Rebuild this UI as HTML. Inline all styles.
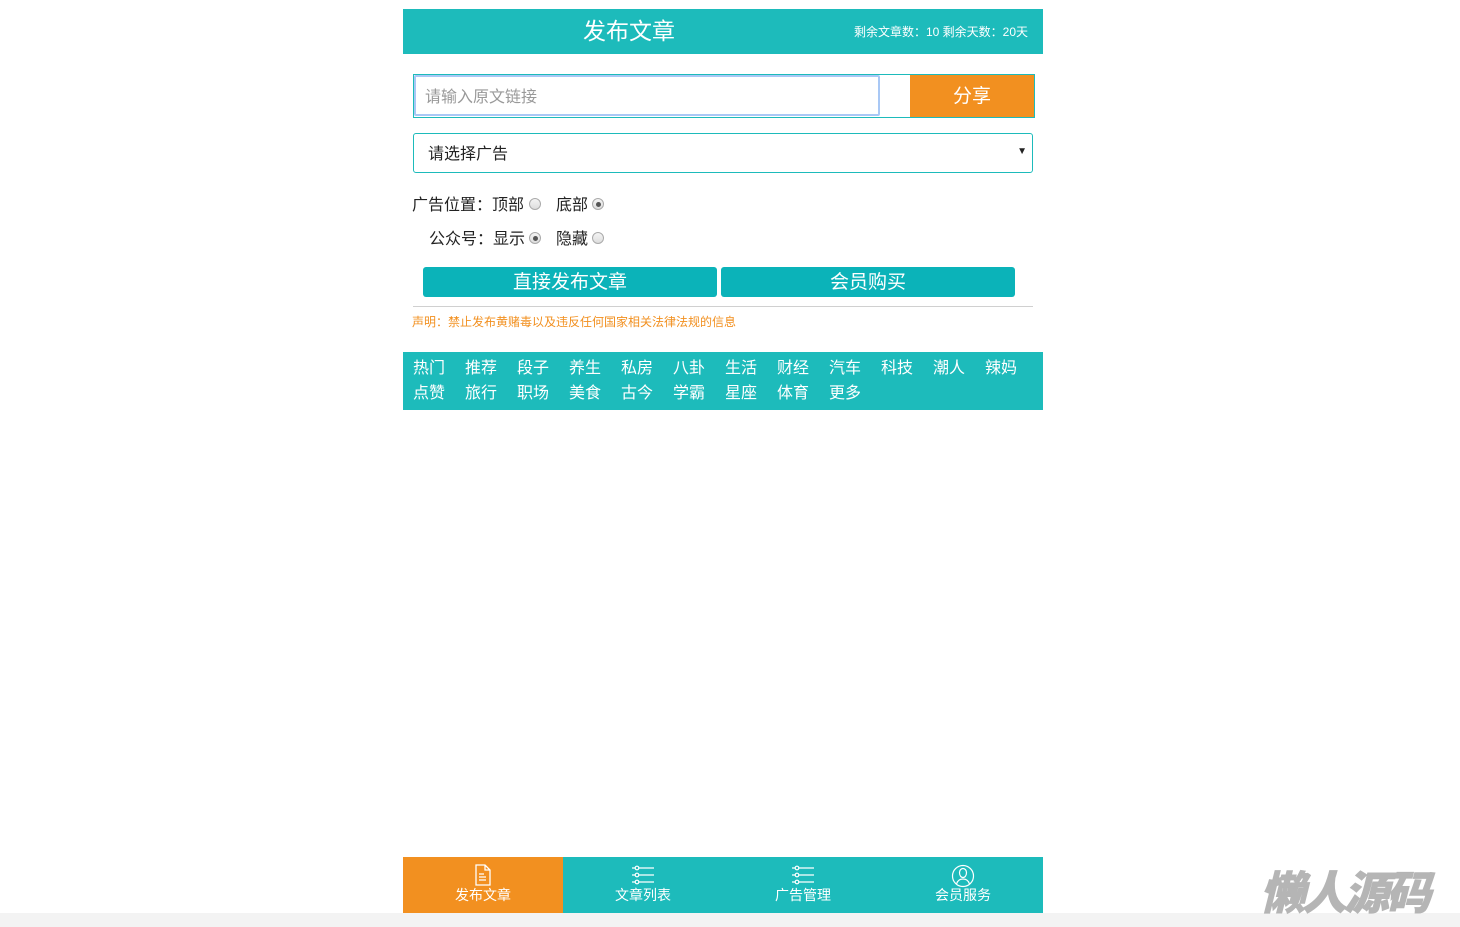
<!DOCTYPE html>
<html><head><meta charset="utf-8"><style>
*{margin:0;padding:0;box-sizing:border-box}
body{width:1460px;height:927px;background:#fff;position:relative;overflow:hidden;font-family:"Liberation Sans","Noto Sans CJK SC",sans-serif;color:#222}
.a{position:absolute}
.t{background:#1dbbbb}
.w{color:#fff}
.cat span{position:absolute;font-size:16px;color:#fff;line-height:20px}
.rad{position:absolute;width:12px;height:12px;border-radius:50%;border:1px solid #aaa;background:linear-gradient(#f4f4f4,#ddd)}
.rad.on::after{content:"";position:absolute;left:2.5px;top:2.5px;width:5px;height:5px;border-radius:50%;background:#555}
.nav{position:absolute;top:857px;width:160px;height:56px;text-align:center;color:#fff;font-size:14px}
.nav .l{position:absolute;top:29px;left:0;right:0;line-height:18px}
</style></head><body>
<div class="a t" style="left:403px;top:9px;width:640px;height:45px"></div>
<div class="a w" style="left:583px;top:16px;font-size:23px;line-height:30px">发布文章</div>
<div class="a w" style="left:854px;top:24px;font-size:12px;line-height:16px">剩余文章数：10 剩余天数：20天</div>

<div class="a" style="left:413px;top:74px;width:622px;height:44px;border:1px solid #1dbbbb"></div>
<div class="a" style="left:414px;top:75px;width:466px;height:41px;border:2px solid #a9c8f5;border-radius:2px;font-size:16px;color:#999;padding:6px 0 0 9px">请输入原文链接</div>
<div class="a w" style="left:910px;top:75px;width:124px;height:42px;background:#f29020;font-size:19px;text-align:center;line-height:44px">分享</div>

<div class="a" style="left:413px;top:133px;width:620px;height:40px;border:1px solid #1dbbbb;border-radius:3px;font-size:16px;padding:6px 0 0 14px">请选择广告<span style="position:absolute;right:5px;top:12px;font-size:10px">▼</span></div>

<div class="a" style="left:412px;top:196px;font-size:16px;line-height:20px">广告位置：顶部</div>
<div class="rad" style="left:529px;top:198px"></div>
<div class="a" style="left:556px;top:196px;font-size:16px;line-height:20px">底部</div>
<div class="rad on" style="left:592px;top:198px"></div>
<div class="a" style="left:429px;top:230px;font-size:16px;line-height:20px">公众号：显示</div>
<div class="rad on" style="left:529px;top:232px"></div>
<div class="a" style="left:556px;top:230px;font-size:16px;line-height:20px">隐藏</div>
<div class="rad" style="left:592px;top:232px"></div>

<div class="a w" style="left:423px;top:267px;width:294px;height:30px;background:#0bb3b9;border-radius:3px;text-align:center;font-size:19px;line-height:32px">直接发布文章</div>
<div class="a w" style="left:721px;top:267px;width:294px;height:30px;background:#0bb3b9;border-radius:3px;text-align:center;font-size:19px;line-height:32px">会员购买</div>
<div class="a" style="left:413px;top:306px;width:620px;height:1px;background:#d0d0d0"></div>
<div class="a" style="left:412px;top:314px;font-size:12px;color:#f29020;line-height:16px">声明：禁止发布黄赌毒以及违反任何国家相关法律法规的信息</div>

<div class="a t cat" style="left:403px;top:352px;width:640px;height:58px">
<span style="left:10px;top:7px">热门</span><span style="left:62px;top:7px">推荐</span><span style="left:114px;top:7px">段子</span><span style="left:166px;top:7px">养生</span><span style="left:218px;top:7px">私房</span><span style="left:270px;top:7px">八卦</span><span style="left:322px;top:7px">生活</span><span style="left:374px;top:7px">财经</span><span style="left:426px;top:7px">汽车</span><span style="left:478px;top:7px">科技</span><span style="left:530px;top:7px">潮人</span><span style="left:582px;top:7px">辣妈</span>
<span style="left:10px;top:32px">点赞</span><span style="left:62px;top:32px">旅行</span><span style="left:114px;top:32px">职场</span><span style="left:166px;top:32px">美食</span><span style="left:218px;top:32px">古今</span><span style="left:270px;top:32px">学霸</span><span style="left:322px;top:32px">星座</span><span style="left:374px;top:32px">体育</span><span style="left:426px;top:32px">更多</span>
</div>

<div class="a" style="left:0;top:913px;width:1460px;height:14px;background:#f3f3f3"></div>

<div class="nav" style="left:403px;background:#f29020">
<svg class="a" style="left:71px;top:7px" width="18" height="22" viewBox="0 0 18 22" fill="none" stroke="#fff" stroke-width="1.3"><path d="M2 1h9l5 5v15H2z M11 1v5h5 M5 10h5 M5 13h7 M5 16h7"/></svg>
<div class="l">发布文章</div></div>
<div class="nav t" style="left:563px">
<svg class="a" style="left:68px;top:8px" width="24" height="20" viewBox="0 0 24 20" fill="none" stroke="#fff" stroke-width="1.2"><path d="M1 3h3M8 3h15M1 10h3M8 10h15M1 17h3M8 17h15"/><circle cx="6" cy="3" r="1.8"/><circle cx="6" cy="10" r="1.8"/><circle cx="6" cy="17" r="1.8"/></svg>
<div class="l">文章列表</div></div>
<div class="nav t" style="left:723px">
<svg class="a" style="left:68px;top:8px" width="24" height="20" viewBox="0 0 24 20" fill="none" stroke="#fff" stroke-width="1.2"><path d="M1 3h3M8 3h15M1 10h3M8 10h15M1 17h3M8 17h15"/><circle cx="6" cy="3" r="1.8"/><circle cx="6" cy="10" r="1.8"/><circle cx="6" cy="17" r="1.8"/></svg>
<div class="l">广告管理</div></div>
<div class="nav t" style="left:883px">
<svg class="a" style="left:68px;top:7px" width="24" height="24" viewBox="0 0 24 24" fill="none" stroke="#fff" stroke-width="1.2"><circle cx="12" cy="12" r="10.5"/><path d="M8.5 8.5a3.5 4 0 0 1 7 0c0 3-1.5 5-3.5 5s-3.5-2-3.5-5z M5.5 20c1-3.5 3.5-5 6.5-5s5.5 1.5 6.5 5"/></svg>
<div class="l">会员服务</div></div>

<div class="a" style="left:1260px;top:862px;font-size:45px;font-weight:900;font-style:italic;color:#b5b5b5;line-height:56px;letter-spacing:-3px;font-family:'Noto Sans CJK SC',sans-serif;-webkit-text-stroke:0.8px #b5b5b5">懒人源码</div>
</body></html>
